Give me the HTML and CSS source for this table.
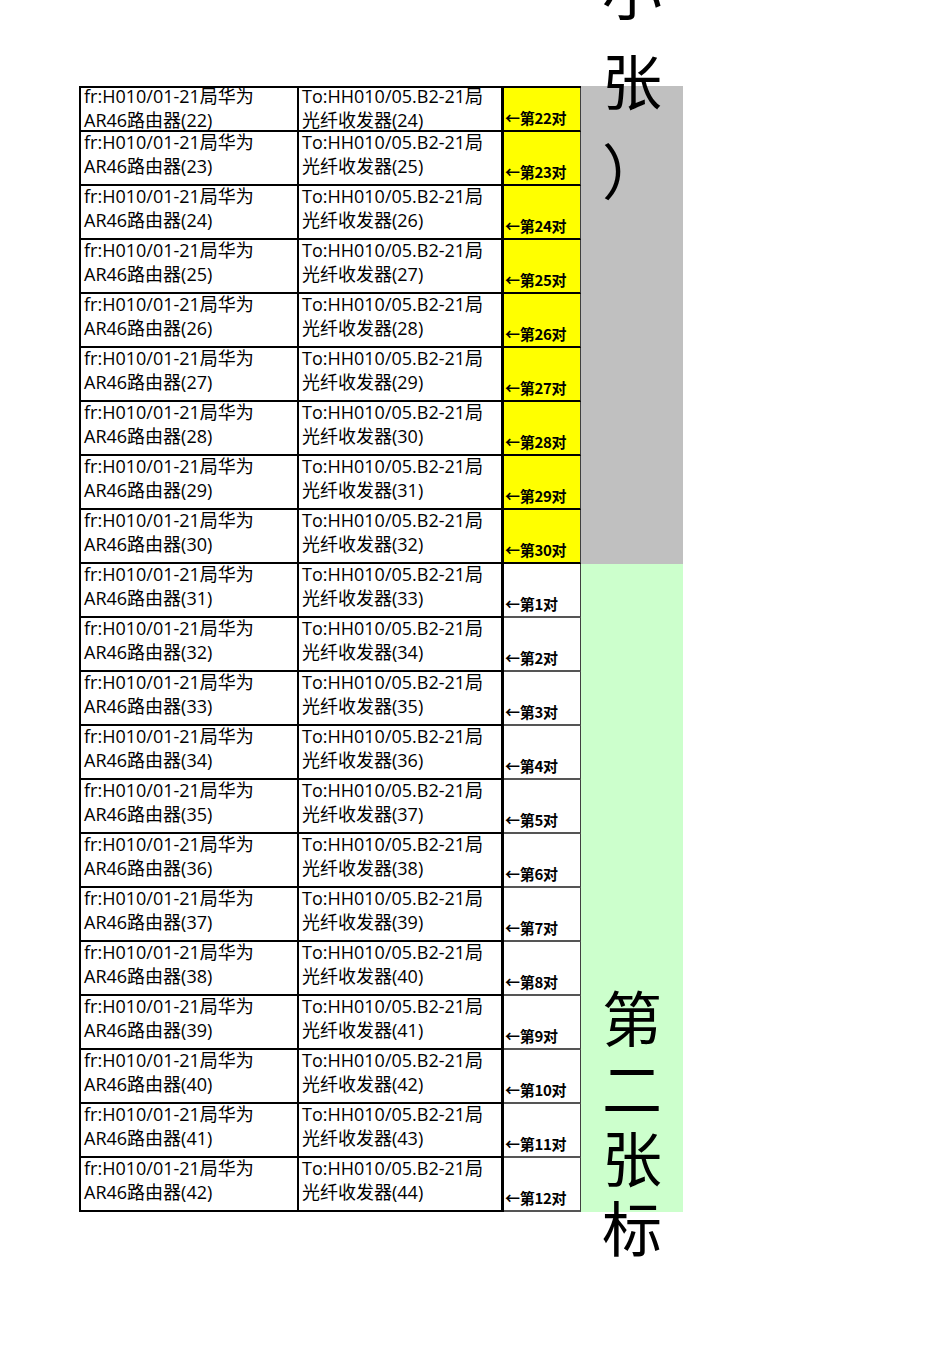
FILE: index.html
```html
<!DOCTYPE html>
<html lang="zh-CN">
<head>
<meta charset="utf-8">
<title>跳线表</title>
<link rel="stylesheet" href="styles.css">
</head>
<body>
<div class="page">
  <div class="sheet">
    <div class="row first"><div class="c1">fr:H010/01-21局华为<br>AR46路由器(22)</div><div class="c2">To:HH010/05.B2-21局<br>光纤收发器(24)</div><div class="c3 yellow">←第22对</div></div>
    <div class="row"><div class="c1">fr:H010/01-21局华为<br>AR46路由器(23)</div><div class="c2">To:HH010/05.B2-21局<br>光纤收发器(25)</div><div class="c3 yellow">←第23对</div></div>
    <div class="row"><div class="c1">fr:H010/01-21局华为<br>AR46路由器(24)</div><div class="c2">To:HH010/05.B2-21局<br>光纤收发器(26)</div><div class="c3 yellow">←第24对</div></div>
    <div class="row"><div class="c1">fr:H010/01-21局华为<br>AR46路由器(25)</div><div class="c2">To:HH010/05.B2-21局<br>光纤收发器(27)</div><div class="c3 yellow">←第25对</div></div>
    <div class="row"><div class="c1">fr:H010/01-21局华为<br>AR46路由器(26)</div><div class="c2">To:HH010/05.B2-21局<br>光纤收发器(28)</div><div class="c3 yellow">←第26对</div></div>
    <div class="row"><div class="c1">fr:H010/01-21局华为<br>AR46路由器(27)</div><div class="c2">To:HH010/05.B2-21局<br>光纤收发器(29)</div><div class="c3 yellow">←第27对</div></div>
    <div class="row"><div class="c1">fr:H010/01-21局华为<br>AR46路由器(28)</div><div class="c2">To:HH010/05.B2-21局<br>光纤收发器(30)</div><div class="c3 yellow">←第28对</div></div>
    <div class="row"><div class="c1">fr:H010/01-21局华为<br>AR46路由器(29)</div><div class="c2">To:HH010/05.B2-21局<br>光纤收发器(31)</div><div class="c3 yellow">←第29对</div></div>
    <div class="row"><div class="c1">fr:H010/01-21局华为<br>AR46路由器(30)</div><div class="c2">To:HH010/05.B2-21局<br>光纤收发器(32)</div><div class="c3 yellow">←第30对</div></div>
    <div class="row"><div class="c1">fr:H010/01-21局华为<br>AR46路由器(31)</div><div class="c2">To:HH010/05.B2-21局<br>光纤收发器(33)</div><div class="c3 plain">←第1对</div></div>
    <div class="row"><div class="c1">fr:H010/01-21局华为<br>AR46路由器(32)</div><div class="c2">To:HH010/05.B2-21局<br>光纤收发器(34)</div><div class="c3 plain">←第2对</div></div>
    <div class="row"><div class="c1">fr:H010/01-21局华为<br>AR46路由器(33)</div><div class="c2">To:HH010/05.B2-21局<br>光纤收发器(35)</div><div class="c3 plain">←第3对</div></div>
    <div class="row"><div class="c1">fr:H010/01-21局华为<br>AR46路由器(34)</div><div class="c2">To:HH010/05.B2-21局<br>光纤收发器(36)</div><div class="c3 plain">←第4对</div></div>
    <div class="row"><div class="c1">fr:H010/01-21局华为<br>AR46路由器(35)</div><div class="c2">To:HH010/05.B2-21局<br>光纤收发器(37)</div><div class="c3 plain">←第5对</div></div>
    <div class="row"><div class="c1">fr:H010/01-21局华为<br>AR46路由器(36)</div><div class="c2">To:HH010/05.B2-21局<br>光纤收发器(38)</div><div class="c3 plain">←第6对</div></div>
    <div class="row"><div class="c1">fr:H010/01-21局华为<br>AR46路由器(37)</div><div class="c2">To:HH010/05.B2-21局<br>光纤收发器(39)</div><div class="c3 plain">←第7对</div></div>
    <div class="row"><div class="c1">fr:H010/01-21局华为<br>AR46路由器(38)</div><div class="c2">To:HH010/05.B2-21局<br>光纤收发器(40)</div><div class="c3 plain">←第8对</div></div>
    <div class="row"><div class="c1">fr:H010/01-21局华为<br>AR46路由器(39)</div><div class="c2">To:HH010/05.B2-21局<br>光纤收发器(41)</div><div class="c3 plain">←第9对</div></div>
    <div class="row"><div class="c1">fr:H010/01-21局华为<br>AR46路由器(40)</div><div class="c2">To:HH010/05.B2-21局<br>光纤收发器(42)</div><div class="c3 plain">←第10对</div></div>
    <div class="row"><div class="c1">fr:H010/01-21局华为<br>AR46路由器(41)</div><div class="c2">To:HH010/05.B2-21局<br>光纤收发器(43)</div><div class="c3 plain">←第11对</div></div>
    <div class="row"><div class="c1">fr:H010/01-21局华为<br>AR46路由器(42)</div><div class="c2">To:HH010/05.B2-21局<br>光纤收发器(44)</div><div class="c3 plain">←第12对</div></div>
  </div>
  <div class="side">
    <div class="gray"><div class="big top">小<br>张<br>）</div></div>
    <div class="green"><div class="big bottom">第<br>二<br>张<br>标</div></div>
  </div>
</div>
</body>
</html>
```

FILE: styles.css
```css
html, body {
  margin: 0;
  padding: 0;
  background: #ffffff;
}

.page {
  display: flex;
  align-items: flex-start;
  padding: 86px 0 0 79px;
  width: 950px;
  height: 1345px;
  box-sizing: border-box;
  overflow: hidden;
  font-family: "Open Sans", "Noto Sans CJK SC", sans-serif;
  color: #000000;
}

.sheet {
  display: flex;
  flex-direction: column;
  border-top: 2px solid #000000;
  border-left: 2px solid #000000;
  width: 502px;
  box-sizing: border-box;
}

.row {
  display: flex;
  height: 54px;
}

.row.first {
  height: 44px;
}

.c1, .c2, .c3 {
  box-sizing: border-box;
  border-bottom: 2px solid #000000;
}

.c1, .c2 {
  font-size: 18px;
  line-height: 24px;
  padding: 0 0 0 3px;
  white-space: nowrap;
  overflow: visible;
}

.c1 {
  width: 218px;
  border-right: 2px solid #000000;
}

.c2 {
  width: 205px;
  border-right: 3px solid #000000;
}

.row .c1, .row .c2 {
  margin-top: -2px;
  height: calc(100% + 2px);
}

.row.first .c1, .row.first .c2 {
  margin-top: 0;
  height: 100%;
}

.row.first .c1 .txt, .row.first .c2 .txt {
  display: block;
}

.row.first .c1, .row.first .c2 {
  padding-top: 0;
  line-height: 24px;
  text-indent: 0;
}

.row.first .c1::before, .row.first .c2::before {
  content: "";
  display: block;
  margin-top: -4px;
}

.c3 {
  width: 77px;
  border-right: 1px solid #404040;
  display: flex;
  align-items: flex-end;
  font-family: "Noto Sans CJK SC", sans-serif;
  font-weight: bold;
  font-size: 15px;
  line-height: 18px;
  padding: 0 0 3px 1px;
  letter-spacing: -0.3px;
  white-space: nowrap;
  overflow: hidden;
}

.c3.yellow {
  background: #ffff00;
  border-bottom: 2px solid #000000;
}

.c3.plain {
  background: #ffffff;
  border-bottom: 2px solid #555555;
}

.side {
  display: flex;
  flex-direction: column;
  width: 102px;
}

.gray {
  height: 478px;
  background: #c0c0c0;
}

.green {
  height: 648px;
  background: #ccffcc;
}

.big {
  font-family: "Noto Sans CJK SC", sans-serif;
  font-size: 60px;
  text-align: center;
  color: #000000;
}

.big.top {
  line-height: 90px;
  margin-top: -142px;
}

.big.bottom {
  line-height: 70px;
  padding-top: 417px;
}
```
